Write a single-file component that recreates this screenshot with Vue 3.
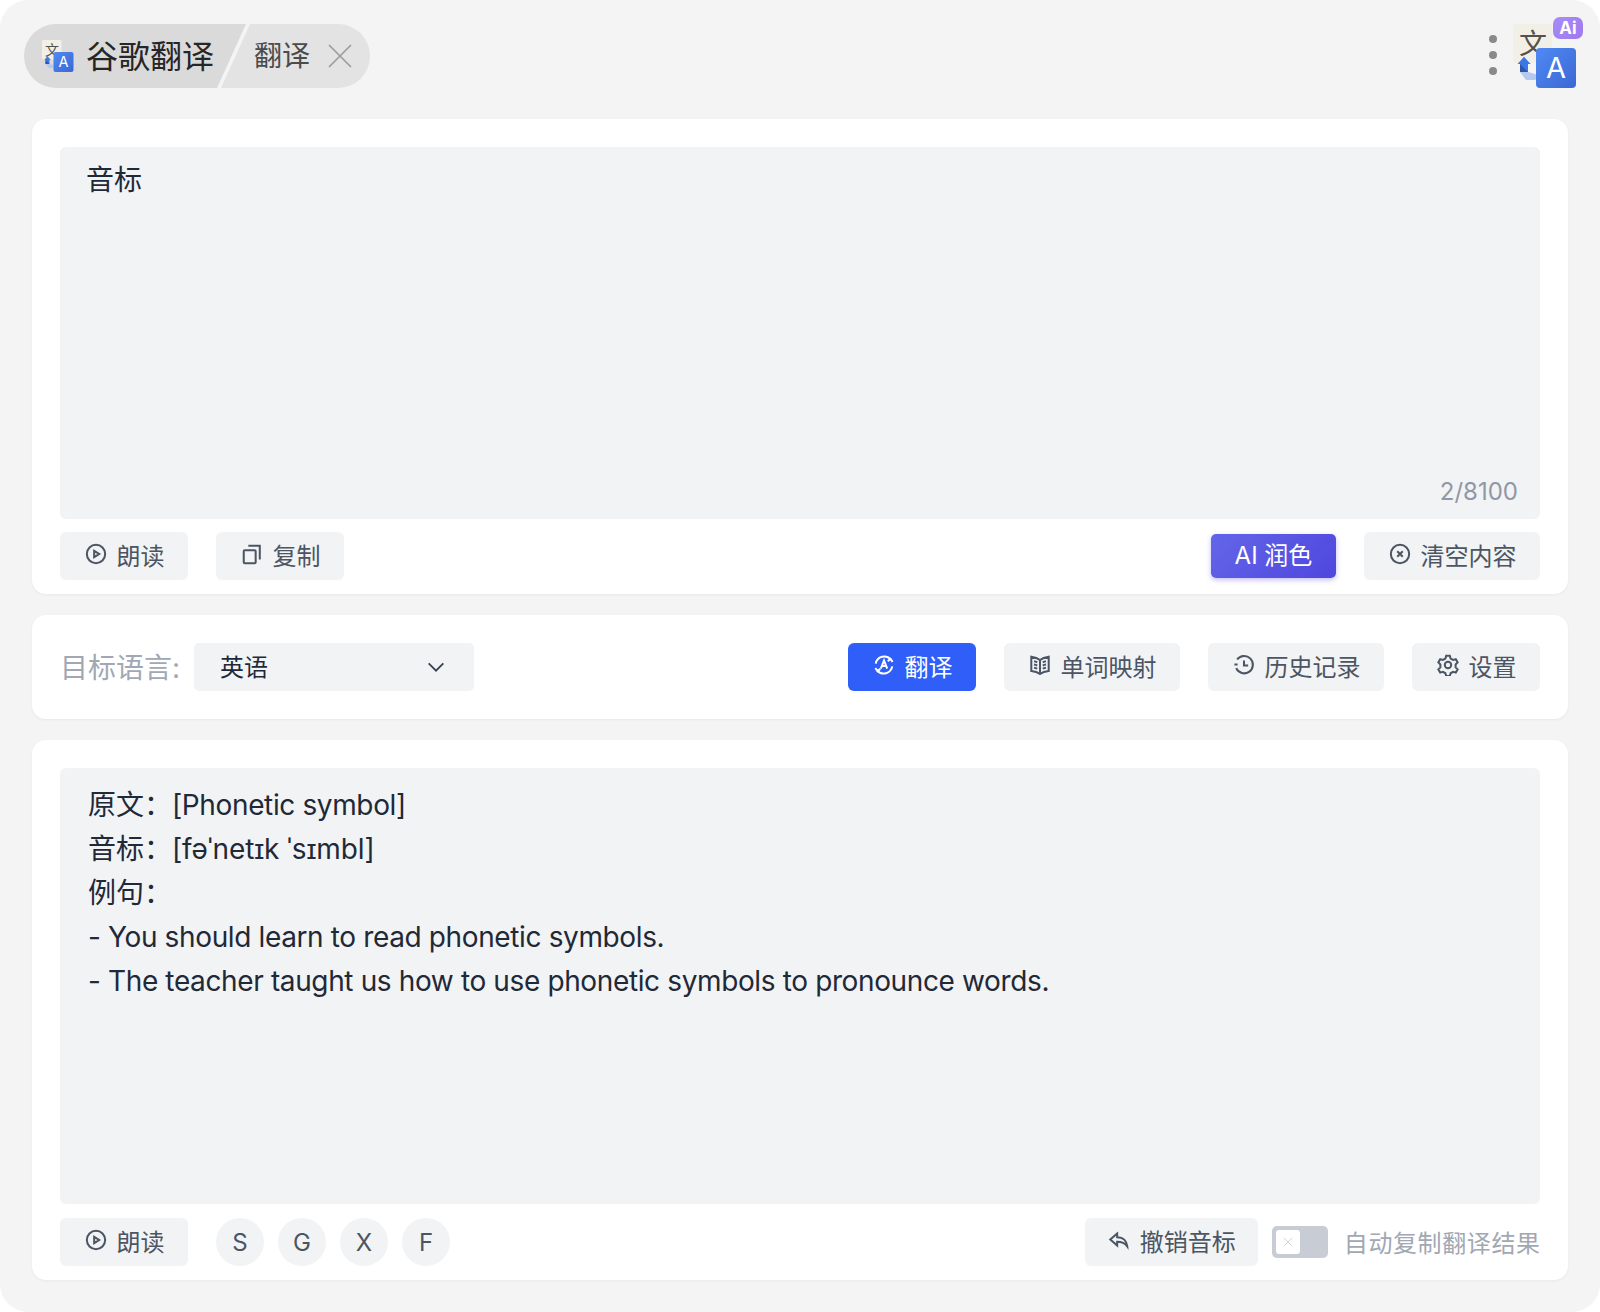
<script setup>
const outputLines = [
  { label: '原文：', text: '[Phonetic symbol]' },
  { label: '音标：', text: '[fəˈnetɪk ˈsɪmbl]' },
  { label: '例句：', text: '' },
  { label: '', text: '- You should learn to read phonetic symbols.' },
  { label: '', text: '- The teacher taught us how to use phonetic symbols to pronounce words.' }
]
const engines = ['S', 'G', 'X', 'F']
</script>

<template>
  <div class="window">
    <header class="topbar">
      <div class="tabs">
        <div class="tab tab-main">
          <svg class="logo-small" viewBox="0 0 64 64">
            <defs>
              <linearGradient id="blue-small" x1="0" y1="0" x2="1" y2="1">
                <stop offset="0" stop-color="#5189f2" />
                <stop offset="1" stop-color="#3a68d4" />
              </linearGradient>
            </defs>
            <rect width="39" height="39" rx="3" fill="#f1efe6" />
            <text x="20" y="30" text-anchor="middle" class="logo-wen">文</text>
            <path d="M7 48h8.300l13.300 4-6.600 4H13z" fill="#b5c9ee" />
            <rect x="23" y="24" width="40" height="40" rx="4" fill="url(#blue-small)" />
            <text x="43" y="54" text-anchor="middle" class="logo-a">A</text>
            <path d="M11 32.700 17.700 40H15v8H7v-8H4.500z" fill="#3b78e7" />
            <path d="M7 40l8 8H7z" fill="#2d55a8" />
          </svg>
          <span>谷歌翻译</span>
        </div>
        <div class="tab tab-sub">
          <span>翻译</span>
          <svg class="tab-close" viewBox="0 0 24 24"><path d="M1 1l22 22M23 1 1 23" /></svg>
        </div>
      </div>
      <div class="top-right">
        <div class="dots"><i></i><i></i><i></i></div>
        <div class="brand">
          <svg class="logo-big" viewBox="0 0 64 64">
            <defs>
              <linearGradient id="blue-big" x1="0" y1="0" x2="1" y2="1">
                <stop offset="0" stop-color="#5189f2" />
                <stop offset="1" stop-color="#3a68d4" />
              </linearGradient>
            </defs>
            <rect width="39" height="39" rx="3" fill="#f1efe6" />
            <text x="20" y="30" text-anchor="middle" class="logo-wen">文</text>
            <path d="M7 48h8.300l13.300 4-6.600 4H13z" fill="#b5c9ee" />
            <rect x="23" y="24" width="40" height="40" rx="4" fill="url(#blue-big)" />
            <text x="43" y="54" text-anchor="middle" class="logo-a">A</text>
            <path d="M11 32.700 17.700 40H15v8H7v-8H4.500z" fill="#3b78e7" />
            <path d="M7 40l8 8H7z" fill="#2d55a8" />
          </svg>
          <span class="ai-badge">Ai</span>
        </div>
      </div>
    </header>

    <section class="card card-input">
      <div class="textbox textbox-input">
        <span>音标</span>
        <span class="counter">2/8100</span>
      </div>
      <div class="actions">
        <div class="group">
          <button class="btn w128">
            <svg viewBox="0 0 24 24"><circle cx="12" cy="12" r="10" /><path d="M10 8.500v7l5.500-3.500z" /></svg>朗读
          </button>
          <button class="btn w128">
            <svg viewBox="0 0 24 24"><rect x="3" y="8" width="13" height="14" rx="1" /><path d="M8 3h12.500v15" /></svg>复制
          </button>
        </div>
        <div class="group">
          <button class="btn-ai">AI 润色</button>
          <button class="btn w176">
            <svg viewBox="0 0 24 24"><circle cx="12" cy="12" r="10" /><path d="M9 9l6 6M15 9l-6 6" /></svg>清空内容
          </button>
        </div>
      </div>
    </section>

    <section class="card card-controls">
      <div class="lang">
        <span class="lang-label">目标语言:</span>
        <div class="select">
          <span>英语</span>
          <svg viewBox="0 0 24 24"><path d="M4 8l8 8 8-8" /></svg>
        </div>
      </div>
      <div class="group">
        <button class="btn btn-primary w128">
          <svg viewBox="0 0 24 24">
            <path d="M3 10.500A9.500 9.500 0 0 1 19.500 6" />
            <path d="M21 13.500A9.500 9.500 0 0 1 4.500 18" />
            <path d="M21.500 8.500l-2.500-3-3 2.500M2.500 15.500l2.500 3 3-2.500" />
            <path d="M8.500 16l3.500-9 3.500 9M9.800 13h4.400" />
          </svg>翻译
        </button>
        <button class="btn w176">
          <svg viewBox="0 0 24 24">
            <path d="M12 6.500C9.500 4.500 6 3.500 2.500 3v15.500c3.500.3 7 1.300 9.500 3.300 2.500-2 6-3 9.500-3.300V3C18 3.500 14.500 4.500 12 6.500zM12 6.500v15.300" />
            <path d="M5.500 8c1.200.2 2.300.5 3.500 1M5.500 11.500c1.200.2 2.300.5 3.500 1M5.500 15c1.200.2 2.300.5 3.500 1M18.500 8c-1.200.2-2.300.5-3.500 1M18.500 11.500c-1.200.2-2.300.5-3.500 1M18.500 15c-1.200.2-2.300.5-3.500 1" />
          </svg>单词映射
        </button>
        <button class="btn w176">
          <svg viewBox="0 0 24 24">
            <path d="M3.500 15.500A9.500 9.500 0 1 0 4.500 6" />
            <path d="M1.500 11.500h3.500M12 7v5.500h4.500" />
          </svg>历史记录
        </button>
        <button class="btn w128">
          <svg viewBox="0 0 24 24">
            <path d="M10 2h4l.8 3 2.700 1.500 3-.8 2 3.500-2.200 2.200v3.200l2.200 2.200-2 3.500-3-.8-2.700 1.500-.8 3h-4l-.8-3-2.700-1.500-3 .8-2-3.500 2.200-2.200v-3.200L1.500 9.200l2-3.500 3 .8L9.200 5z" />
            <circle cx="12" cy="12" r="3.500" />
          </svg>设置
        </button>
      </div>
    </section>

    <section class="card card-output">
      <div class="textbox textbox-output">
        <div v-for="line in outputLines" :key="line.label + line.text" class="line">{{ line.label }}<span class="latin">{{ line.text }}</span></div>
      </div>
      <div class="actions actions-output">
        <div class="group">
          <button class="btn w128">
            <svg viewBox="0 0 24 24"><circle cx="12" cy="12" r="10" /><path d="M10 8.500v7l5.500-3.500z" /></svg>朗读
          </button>
          <div class="engines">
            <button v-for="e in engines" :key="e" class="engine">{{ e }}</button>
          </div>
        </div>
        <div class="group-tight">
          <button class="btn w173">
            <svg viewBox="0 0 24 24"><path d="M10 5 2.500 11.500 10 18v-4c4.500 0 8 .8 11 5-.5-5.500-4-10-11-10z" /></svg>撤销音标
          </button>
          <div class="toggle">
            <span class="thumb">
              <svg viewBox="0 0 12 12"><path d="M1 1l10 10M11 1 1 11" /></svg>
            </span>
          </div>
          <span class="auto-label">自动复制翻译结果</span>
        </div>
      </div>
    </section>
  </div>
</template>

<style>
html, body { margin: 0; background: #fff; }
</style>

<style scoped>
.window {
  box-sizing: border-box;
  width: 1600px;
  height: 1312px;
  padding: 24px 32px 0;
  border-radius: 28px;
  background: #f4f4f4;
  font-family: Inter, "Noto Sans CJK SC", sans-serif;
  color: #1f2937;
}
.topbar {
  display: flex;
  justify-content: space-between;
  align-items: flex-start;
  height: 64px;
  margin: 0 -16px 31px -8px;
}
.tabs { display: flex; height: 64px; }
.tab { display: flex; align-items: center; height: 64px; box-sizing: border-box; padding-bottom: 4px; }
.tab-main {
  width: 222px;
  padding-left: 18px;
  border-radius: 32px 0 0 32px;
  background: #dadada;
  clip-path: polygon(0 0, 100% 0, 193px 100%, 0 100%);
  font-size: 32px;
  color: #262626;
}
.logo-small { width: 32px; height: 32px; margin: 4px 12px 0 0; flex: none; overflow: visible; }
.tab-sub {
  width: 149px;
  margin-left: -25px;
  padding-left: 33px;
  border-radius: 0 32px 32px 0;
  background: #e3e3e3;
  clip-path: polygon(29px 0, 100% 0, 100% 100%, 0 100%);
  font-size: 28px;
  color: #4b4b4b;
}
.tab-close { width: 24px; height: 24px; margin: 4px 0 0 18px; fill: none; stroke: #9a9a9a; stroke-width: 1.600; }
.logo-wen { font-size: 28px; fill: #55524c; font-family: "Noto Sans CJK SC", sans-serif; }
.logo-a { font-size: 29px; fill: #fff; font-family: Inter, sans-serif; }

.top-right { display: flex; align-items: flex-start; }
.dots { display: flex; flex-direction: column; gap: 8px; margin: 11px 16px 0 0; }
.dots i { width: 8px; height: 8px; border-radius: 50%; background: #8a8a8a; }
.brand { position: relative; width: 71px; height: 64px; }
.logo-big { width: 64px; height: 64px; display: block; overflow: visible; }
.ai-badge {
  position: absolute;
  left: 40px;
  top: -7px;
  width: 30px;
  height: 22px;
  border-radius: 7px;
  background: linear-gradient(135deg, #a78bfa, #9f7aea);
  color: #fff;
  font-size: 17px;
  font-weight: 700;
  line-height: 22px;
  text-align: center;
}

.card {
  box-sizing: border-box;
  border-radius: 14px;
  background: #fff;
  box-shadow: 0 1px 3px rgba(0, 0, 0, 0.05);
}
.card-input { height: 475px; padding: 28px 28px 14px; margin-bottom: 21px; }
.card-controls {
  display: flex;
  justify-content: space-between;
  align-items: center;
  height: 104px;
  padding: 0 28px;
  margin-bottom: 21px;
}
.card-output { height: 540px; padding: 28px 28px 14px; }

.textbox {
  box-sizing: border-box;
  border-radius: 6px;
  background: #f2f3f5;
  font-size: 28px;
  line-height: 44px;
}
.textbox-input {
  position: relative;
  height: 372px;
  padding: 11px 26px;
}
.counter {
  position: absolute;
  right: 22px;
  bottom: 11px;
  font-size: 24px;
  line-height: 32px;
  color: #8f98a4;
}
.textbox-output { height: 436px; padding: 15px 28px; }
.latin { letter-spacing: -0.37px; }
.line:nth-child(2) .latin { letter-spacing: -0.13px; }

.actions {
  display: flex;
  justify-content: space-between;
  align-items: center;
  margin-top: 13px;
  height: 48px;
}
.actions-output { margin-top: 14px; }
.group { display: flex; align-items: center; gap: 28px; }
.group-tight { display: flex; align-items: center; }
.engines { display: flex; gap: 14px; }

.btn, .btn-ai, .engine {
  border: 0;
  padding: 0;
  font-family: inherit;
  font-size: 24px;
  cursor: pointer;
}
.btn {
  display: inline-flex;
  align-items: center;
  justify-content: center;
  gap: 10px;
  height: 48px;
  padding: 0 0 4px 1px;
  border-radius: 6px;
  background: #f2f3f5;
  color: #4b5563;
}
.btn svg {
  width: 22px;
  height: 22px;
  margin-top: -1px;
  fill: none;
  stroke: currentColor;
  stroke-width: 2.200;
  flex: none;
}
.w128 { width: 128px; }
.w176 { width: 176px; }
.w173 { width: 173px; }
.btn-primary { background: #2f5ef8; color: #fff; }
.btn-ai {
  width: 125px;
  height: 44px;
  padding-bottom: 5px;
  border-radius: 5px;
  background: linear-gradient(135deg, #6366e8, #4f46de);
  box-shadow: 0 2px 5px rgba(79, 70, 229, 0.35);
  color: #fff;
}
.engine {
  width: 48px;
  height: 48px;
  border-radius: 50%;
  background: #f2f3f5;
  color: #4b5563;
}

.lang { display: flex; align-items: center; }
.lang-label { width: 134px; padding-bottom: 3px; font-size: 28px; color: #a1a8b3; }
.select {
  display: flex;
  align-items: center;
  justify-content: space-between;
  box-sizing: border-box;
  width: 280px;
  height: 48px;
  padding: 0 26px 3px;
  border-radius: 5px;
  background: #f2f3f5;
  font-size: 24px;
  color: #1f2937;
}
.select svg { width: 22px; height: 22px; margin: 3px 1px 0 0; fill: none; stroke: #374151; stroke-width: 2; }

.toggle {
  box-sizing: border-box;
  width: 56px;
  height: 32px;
  margin-left: 14px;
  padding: 4px;
  border-radius: 5px;
  background: #c8ccd4;
}
.thumb {
  display: flex;
  align-items: center;
  justify-content: center;
  width: 24px;
  height: 24px;
  border-radius: 3px;
  background: #fff;
}
.thumb svg { width: 10px; height: 10px; fill: none; stroke: #d1d5db; stroke-width: 1.200; }
.auto-label { margin-left: 16px; padding-bottom: 2px; font-size: 24px; letter-spacing: 0.6px; color: #a1a8b3; margin-right: -0.6px; }
</style>
